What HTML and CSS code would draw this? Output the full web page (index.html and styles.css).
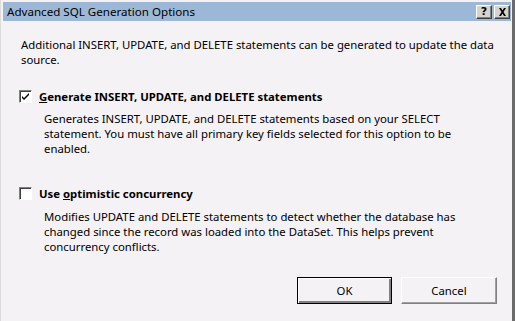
FILE: index.html
```html
<!DOCTYPE html>
<html lang="en">
<head>
    <meta charset="UTF-8">
    <title>Advanced SQL Generation Options</title>
    <link rel="stylesheet" href="styles.css">
</head>
<body>
    <div class="window">
        <div class="titlebar">
            <span class="title">Advanced SQL Generation Options</span>
            <div class="caption-buttons">
                <span class="cap-btn">?</span>
                <span class="cap-btn">
                    <svg width="9" height="8" viewBox="0 0 9 8"><path d="M1 0h2l1.5 2.5L6 0h2L5.5 4 8 8H6L4.5 5.5 3 8H1l2.5-4z" fill="#000"/></svg>
                </span>
            </div>
        </div>

        <div class="content">
            <p class="intro">Additional INSERT, UPDATE, and DELETE statements can be generated to update the data source.</p>

            <div class="option">
                <label class="opt-label"><span class="check checked">
                    <svg width="9" height="9" viewBox="0 0 9 9"><path d="M1 4l2 2 5-5v2L3 8 1 6z" fill="#000"/></svg>
                </span><span><u>G</u>enerate INSERT, UPDATE, and DELETE statements</span></label>
                <p class="desc">Generates INSERT, UPDATE, and DELETE statements based on your SELECT statement. You must have all primary key fields selected for this option to be enabled.</p>
            </div>

            <div class="option second">
                <label class="opt-label"><span class="check"></span><span>Use <u>o</u>ptimistic concurrency</span></label>
                <p class="desc">Modifies UPDATE and DELETE statements to detect whether the database has changed since the record was loaded into the DataSet. This helps prevent concurrency conflicts.</p>
            </div>

            <div class="buttons">
                <button class="btn default">OK</button>
                <button class="btn">Cancel</button>
            </div>
        </div>
    </div>
</body>
</html>
```

FILE: styles.css
```css
html, body { margin: 0; padding: 0; }
body { font-family: "Noto Sans", "Open Sans", sans-serif; font-size: 11.35px; color: #000; background: #f5f2f6; }

.window { width: 515px; height: 321px; box-sizing: border-box; border-left: 1px solid #dcdcdc; border-right: 3px solid #6b6b6b; padding-top: 2px; background: #f5f2f6; }

.titlebar { display: flex; align-items: center; justify-content: space-between; height: 19px; margin: 0 1px 0 2px; background: #9db8d7; padding-left: 4px; }
.title { line-height: 19px; font-size: 11.6px; }
.caption-buttons { display: flex; gap: 2px; padding-right: 1px; }
.cap-btn { width: 16px; height: 14px; display: flex; align-items: center; justify-content: center; background: #d6d3ce; border: 1px solid; border-color: #fff #404040 #404040 #fff; box-shadow: inset -1px -1px 0 #808080; font: bold 11px "DejaVu Sans", sans-serif; box-sizing: border-box; }

.content { padding: 16px 0 0 20px; }
.intro { margin: 0; width: 478px; line-height: 15px; }

.option { margin-top: 22px; }
.option.second { margin-top: 30px; }
.opt-label { display: flex; align-items: center; gap: 7px; height: 15px; line-height: 15px; font-weight: bold; margin-left: -2px; }
.opt-label u { text-decoration: underline; }
.check { width: 13px; height: 13px; box-sizing: border-box; background: #fff; border: 1px solid; border-color: #808080 #fff #fff #808080; box-shadow: inset 1px 1px 0 #404040; display: flex; align-items: center; justify-content: center; }
.desc { margin: 7px 0 0 23px; width: 420px; line-height: 15px; }
.second .desc { margin-top: 8px; }

.buttons { display: flex; justify-content: flex-end; gap: 9px; margin: 23px 15px 0 0; }
.btn { width: 96px; height: 27px; font: inherit; background: #f5f2f6; border: 1px solid; border-color: #fff #808080 #808080 #fff; box-shadow: inset -1px -1px 0 #a0a0a0; padding: 0; }
.btn.default { width: 95px; border: 1px solid #000; box-shadow: inset 1px 1px 0 #fff, inset -2px -2px 0 #808080; }
```
